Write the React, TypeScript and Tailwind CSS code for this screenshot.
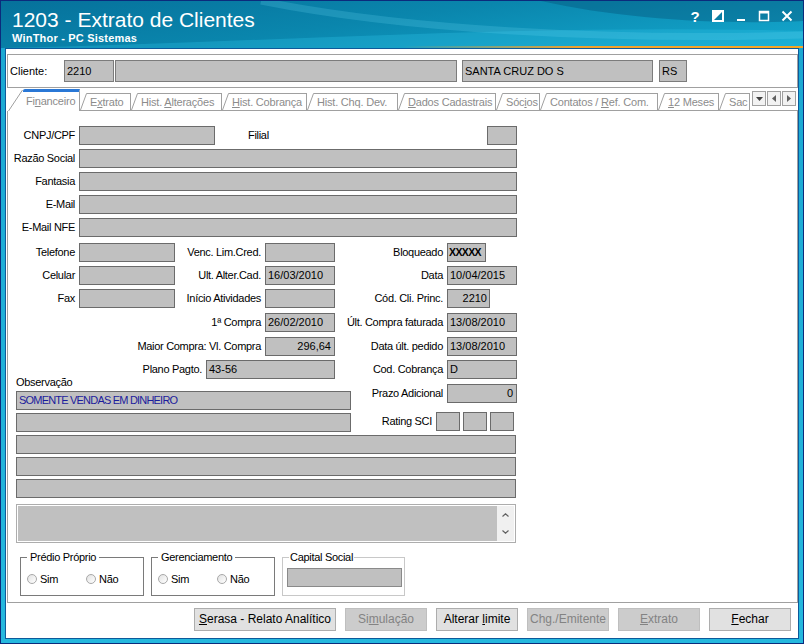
import type { ReactNode } from 'react';

type Tab = { pre: string; key?: string; post?: string; w: string };

const tabs: Tab[] = [
  { pre: 'E', key: 'x', post: 'trato', w: 'w-[44px]' },
  { pre: 'Hist. ', key: 'A', post: 'lterações', w: 'w-[84px]' },
  { pre: '', key: 'H', post: 'ist. Cobrança', w: 'w-[78px]' },
  { pre: 'Hist. Chq. Dev.', w: 'w-[84px]' },
  { pre: '', key: 'D', post: 'ados Cadastrais', w: 'w-[91px]' },
  { pre: 'Sóc', key: 'i', post: 'os', w: 'w-[37px]' },
  { pre: 'Contatos / ', key: 'R', post: 'ef. Com.', w: 'w-[111px]' },
  { pre: '', key: '1', post: '2 Meses', w: 'w-[54px]' },
  { pre: 'Sac', w: 'w-[24px]' },
];

function Field({ className = '', children }: { className?: string; children?: ReactNode }) {
  return (
    <div
      className={`h-[19px] shrink-0 overflow-hidden whitespace-nowrap border border-[#6b6b6b] bg-[#c0c0c0] px-[2px] leading-[17px] ${className}`}
    >
      {children}
    </div>
  );
}

function Label({ className = '', children }: { className?: string; children: ReactNode }) {
  return (
    <div className={`shrink-0 whitespace-nowrap text-right tracking-[-0.3px] ${className}`}>
      {children}
    </div>
  );
}

function Radio({ label, className = '' }: { label: string; className?: string }) {
  return (
    <div className={`flex items-center ${className}`}>
      <span className="inline-block h-[10px] w-[10px] rounded-full border border-[#a8a8a8] bg-[linear-gradient(135deg,#e2e2e2,#ffffff)]" />
      <span className="ml-[3px] tracking-[-0.3px]">{label}</span>
    </div>
  );
}

function Btn({
  children,
  disabled = false,
  className = 'w-[82px]',
}: {
  children: ReactNode;
  disabled?: boolean;
  className?: string;
}) {
  return (
    <button
      className={`h-[23px] border text-[12px] leading-[21px] ${
        disabled
          ? 'border-[#bfbfbf] bg-[#cccccc] text-[#838383]'
          : 'border-[#adadad] bg-[#e1e1e1] text-black'
      } ${className}`}
    >
      {children}
    </button>
  );
}

function TitleBar() {
  return (
    <div className="relative flex h-[47px] flex-col overflow-hidden bg-[linear-gradient(172deg,#06719b_0%,#0a86ad_45%,#14a9cf_100%)]">
      {/* background swooshes */}
      <svg
        className="absolute inset-0 h-full w-full"
        viewBox="0 0 802 47"
        preserveAspectRatio="none"
      >
        <path d="M540 0 C 620 18 720 24 802 20 L802 0 Z" fill="#034a70" opacity="0.35" />
        <path d="M0 47 C 260 42 520 22 802 30 L802 47 Z" fill="#30c4e8" opacity="0.3" />
        <path
          d="M260 0 C 400 28 600 40 802 34"
          stroke="#6bd6f0"
          strokeOpacity="0.22"
          strokeWidth="7"
          fill="none"
        />
      </svg>

      <div className="relative flex flex-1">
        <div className="pl-[11px] pt-[7px] text-white">
          <div className="text-[21px] leading-[24px]">1203 - Extrato de Clientes</div>
          <div className="text-[11px] font-bold leading-[13px] tracking-[0.2px]">
            WinThor - PC Sistemas
          </div>
        </div>

        {/* window buttons */}
        <div className="ml-auto flex items-start gap-[11px] pr-[10px] pt-[9px]">
          <div className="flex h-[12px] w-[12px] items-center justify-center text-[15px] font-bold leading-none text-white">
            ?
          </div>
          <svg width="12" height="12" viewBox="0 0 12 12">
            <rect x="1" y="1" width="10" height="10" stroke="white" strokeWidth="2" fill="none" />
            <path d="M1 1 H11 L1 11 Z" fill="white" />
          </svg>
          <svg width="12" height="12" viewBox="0 0 12 12">
            <rect x="2" y="9" width="8" height="2" fill="white" />
          </svg>
          <svg width="12" height="12" viewBox="0 0 12 12">
            <rect x="1.5" y="1.5" width="9" height="9" stroke="white" strokeWidth="1.5" fill="none" />
            <rect x="1" y="1" width="10" height="2.5" fill="white" />
          </svg>
          <svg width="12" height="12" viewBox="0 0 12 12">
            <path d="M1.5 1.5 L10.5 10.5 M10.5 1.5 L1.5 10.5" stroke="white" strokeWidth="2" />
          </svg>
        </div>
      </div>

      <div className="relative h-[2px] bg-[linear-gradient(90deg,transparent_50%,#f0a12c_72%,#f6a623)]" />
    </div>
  );
}

function ClientBar() {
  const box = 'h-[22px] shrink-0 border border-[#7c7c7c] bg-[#c0c0c0] pl-[2px] leading-[20px]';
  return (
    <div className="ml-px mt-[5px] flex h-[34px] items-center border border-[#a0a0a0] pl-[2px] text-[11px]">
      <span className="w-[54px]">Cliente:</span>
      <div className={`${box} w-[50px]`}>2210</div>
      <div className={`${box} ml-px w-[342px]`} />
      <div className={`${box} ml-[5px] w-[191px]`}>SANTA CRUZ DO S</div>
      <div className={`${box} ml-[6px] w-[28px]`}>RS</div>
    </div>
  );
}

function TabStrip() {
  return (
    <div className="ml-px flex h-[23px] items-end text-[11px] tracking-[-0.2px] text-[#8c8c8c]">
      {/* active tab */}
      <div className="ml-px flex h-[22px] items-end bg-white">
        <svg width="15" height="22" viewBox="0 0 15 22">
          <path d="M0.5 22 L14.5 1" stroke="#a0a0a0" fill="none" />
        </svg>
        <div className="h-[22px] w-[57px] rounded-tl-[2px] border-r border-t-[3px] border-r-[#a0a0a0] border-t-[#2a78d6] pl-[3px] pt-[1px] leading-[16px]">
          Fi<span className="underline">n</span>anceiro
        </div>
      </div>

      {/* remaining tabs */}
      <div className="flex h-[23px] flex-1 items-end overflow-hidden border-b border-[#a0a0a0]">
        {tabs.map((t) => (
          <div key={t.pre + (t.post ?? '')} className="flex shrink-0 items-end">
            <svg width="7" height="17" viewBox="0 0 7 17">
              <path d="M0.5 17 L6.5 0.5 H7" stroke="#a0a0a0" fill="none" />
            </svg>
            <div
              className={`h-[17px] whitespace-nowrap border-r border-t border-[#a0a0a0] pl-[3px] leading-[16px] ${t.w}`}
            >
              {t.pre}
              {t.key && <span className="underline">{t.key}</span>}
              {t.post}
            </div>
          </div>
        ))}
      </div>

      <div className="flex h-[23px] items-start gap-px border-b border-[#a0a0a0] pr-[2px] pt-[3px]">
        <div className="flex h-[15px] w-[14px] items-center justify-center border border-[#a0a0a0] bg-[#f2f2f2]">
          <svg width="7" height="4" viewBox="0 0 7 4">
            <path d="M0 0 H7 L3.5 4 Z" fill="#404040" />
          </svg>
        </div>
        <div className="flex h-[15px] w-[14px] items-center justify-center border border-[#a0a0a0] bg-[#f2f2f2]">
          <svg width="4" height="7" viewBox="0 0 4 7">
            <path d="M4 0 V7 L0 3.5 Z" fill="#606060" />
          </svg>
        </div>
        <div className="flex h-[15px] w-[14px] items-center justify-center border border-[#a0a0a0] bg-[#f2f2f2]">
          <svg width="4" height="7" viewBox="0 0 4 7">
            <path d="M0 0 V7 L4 3.5 Z" fill="#606060" />
          </svg>
        </div>
      </div>
    </div>
  );
}

function FinancePanel() {
  return (
    <div className="ml-px flex h-[492px] flex-col border-x border-b border-[#a0a0a0] text-[11px]">
      {/* identification */}
      <div className="mt-[15px] flex items-center">
        <Label className="w-[67px]">CNPJ/CPF</Label>
        <Field className="ml-[4px] w-[136px]" />
        <div className="ml-[33px] w-[239px] tracking-[-0.3px]">Filial</div>
        <Field className="w-[30px]" />
      </div>
      {['Razão Social', 'Fantasia', 'E-Mail', 'E-Mail NFE'].map((l) => (
        <div key={l} className="mt-[4px] flex items-center">
          <Label className="w-[67px]">{l}</Label>
          <Field className="ml-[4px] w-[438px]" />
        </div>
      ))}

      {/* contacts and dates */}
      <div className="mt-[6px] flex items-center">
        <Label className="w-[67px]">Telefone</Label>
        <Field className="ml-[4px] w-[96px]" />
        <Label className="w-[86px]">Venc. Lim.Cred.</Label>
        <Field className="ml-[4px] w-[70px]" />
        <Label className="w-[108px]">Bloqueado</Label>
        <Field className="ml-[4px] w-[39px] px-px text-[10.5px] font-bold tracking-[-0.6px]">XXXXX</Field>
      </div>
      <div className="mt-[4px] flex items-center">
        <Label className="w-[67px]">Celular</Label>
        <Field className="ml-[4px] w-[96px]" />
        <Label className="w-[86px]">Ult. Alter.Cad.</Label>
        <Field className="ml-[4px] w-[70px]">16/03/2010</Field>
        <Label className="w-[108px]">Data</Label>
        <Field className="ml-[4px] w-[70px]">10/04/2015</Field>
      </div>
      <div className="mt-[4px] flex items-center">
        <Label className="w-[67px]">Fax</Label>
        <Field className="ml-[4px] w-[96px]" />
        <Label className="w-[86px]">Início Atividades</Label>
        <Field className="ml-[4px] w-[70px]" />
        <Label className="w-[108px]">Cód. Cli. Princ.</Label>
        <Field className="ml-[4px] w-[43px] text-right">2210</Field>
      </div>
      <div className="mt-[5px] flex items-center">
        <Label className="w-[253px]">1ª Compra</Label>
        <Field className="ml-[4px] w-[70px]">26/02/2010</Field>
        <Label className="w-[108px]">Últ. Compra faturada</Label>
        <Field className="ml-[4px] w-[70px]">13/08/2010</Field>
      </div>
      <div className="mt-[5px] flex items-center">
        <Label className="w-[253px]">Maior Compra: Vl. Compra</Label>
        <Field className="ml-[4px] w-[70px] pr-[3px] text-right">296,64</Field>
        <Label className="w-[108px]">Data últ. pedido</Label>
        <Field className="ml-[4px] w-[70px]">13/08/2010</Field>
      </div>
      <div className="mt-[4px] flex items-center">
        <Label className="w-[194px]">Plano Pagto.</Label>
        <Field className="ml-[4px] w-[129px]">43-56</Field>
        <Label className="w-[108px]">Cod. Cobrança</Label>
        <Field className="ml-[4px] w-[70px]">D</Field>
      </div>

      {/* notes */}
      <div className="-mt-[4px] flex">
        <div className="ml-[8px] w-[335px]">
          <div className="h-[14px] leading-[14px] tracking-[-0.3px]">Observação</div>
          <Field className="mt-[2px] w-[335px] tracking-[-0.8px] text-[#1c1c9c]">
            SOMENTE VENDAS EM DINHEIRO
          </Field>
          <Field className="mt-[3px] w-[335px]" />
        </div>
        <div className="flex flex-col">
          <div className="mt-[9px] flex items-center">
            <Label className="w-[92px]">Prazo Adicional</Label>
            <Field className="ml-[4px] w-[70px] pr-[3px] text-right">0</Field>
          </div>
          <div className="mt-[9px] flex items-center">
            <Label className="w-[81px]">Rating SCI</Label>
            <Field className="ml-[4px] w-[24px]" />
            <Field className="ml-[3px] w-[24px]" />
            <Field className="ml-[3px] w-[24px]" />
          </div>
        </div>
      </div>
      <Field className="ml-[8px] mt-[3px] w-[500px]" />
      <Field className="ml-[8px] mt-[3px] w-[500px]" />
      <Field className="ml-[8px] mt-[3px] w-[500px]" />

      <div className="ml-[8px] mt-[6px] flex h-[39px] w-[500px] border border-[#adadad] bg-white p-px">
        <div className="flex-1 bg-[#c0c0c0]" />
        <div className="flex w-[17px] flex-col items-center justify-between bg-[#f0f0f0] py-[7px]">
          <svg width="7" height="4" viewBox="0 0 7 4">
            <path d="M0.5 3.5 L3.5 0.8 L6.5 3.5" stroke="#606060" strokeWidth="1.2" fill="none" />
          </svg>
          <svg width="7" height="4" viewBox="0 0 7 4">
            <path d="M0.5 0.5 L3.5 3.2 L6.5 0.5" stroke="#606060" strokeWidth="1.2" fill="none" />
          </svg>
        </div>
      </div>

      {/* option groups */}
      <div className="ml-[12px] mt-[8px] flex gap-[7px]">
        <fieldset className="h-[45px] w-[124px] border border-[#7a7a7a] pl-[6px]">
          <legend className="px-[3px] leading-[13px] tracking-[-0.3px]">Prédio Próprio</legend>
          <div className="mt-[7px] flex">
            <Radio label="Sim" className="w-[59px]" />
            <Radio label="Não" />
          </div>
        </fieldset>
        <fieldset className="h-[45px] w-[124px] border border-[#7a7a7a] pl-[6px]">
          <legend className="px-[3px] leading-[13px] tracking-[-0.3px]">Gerenciamento</legend>
          <div className="mt-[7px] flex">
            <Radio label="Sim" className="w-[59px]" />
            <Radio label="Não" />
          </div>
        </fieldset>
        <fieldset className="h-[45px] w-[123px] border border-[#c8c8c8] pl-[6px]">
          <legend className="px-[1px] leading-[13px] tracking-[-0.3px]">Capital Social</legend>
          <Field className="-ml-[2px] mt-[4px] w-[115px] border-[#8a8a8a]" />
        </fieldset>
      </div>
    </div>
  );
}

function ButtonBar() {
  return (
    <div className="flex flex-1 items-start justify-end gap-[9px] pr-[7px] pt-[5px]">
      <Btn className="w-[142px]">
        <span className="underline">S</span>erasa - Relato Analítico
      </Btn>
      <Btn disabled>
        Si<span className="underline">m</span>ulação
      </Btn>
      <Btn>
        Alterar <span className="underline">l</span>imite
      </Btn>
      <Btn disabled>
        Ch<span className="underline">g</span>./Emitente
      </Btn>
      <Btn disabled>
        <span className="underline">E</span>xtrato
      </Btn>
      <Btn>
        <span className="underline">F</span>echar
      </Btn>
    </div>
  );
}

export default function App() {
  return (
    <div className="h-[644px] w-[804px] overflow-hidden border border-[#0b2b7c] bg-[#0b2b7c] font-['Liberation_Sans',Arial,sans-serif] text-black">
      <TitleBar />
      <div className="h-[595px] bg-[linear-gradient(180deg,#1ba8d2,#25b8de)] px-[4px] pb-[4px]">
        <div className="flex h-full flex-col border border-[#0d5a9a] bg-white">
          <ClientBar />
          <TabStrip />
          <FinancePanel />
          <ButtonBar />
        </div>
      </div>
    </div>
  );
}
